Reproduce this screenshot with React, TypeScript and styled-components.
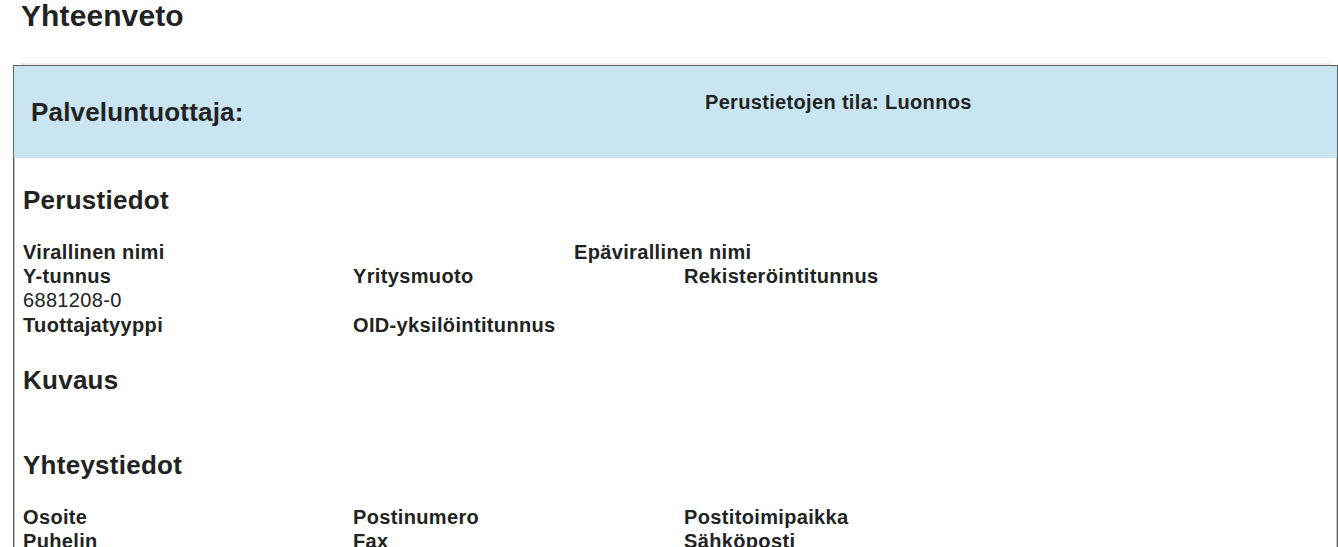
import styled, { createGlobalStyle } from "styled-components";

const GlobalStyle = createGlobalStyle`
  body {
    margin: 0;
    background: #fff;
    color: #222;
    font-family: "Liberation Sans", Arial, sans-serif;
  }
`;

type Field = { label: string; value?: string };
type FieldRow = { columns: string; fields: Field[] };

const THREE = "330px 331px 330px";

const basicRows: FieldRow[] = [
  { columns: "551px 551px", fields: [{ label: "Virallinen nimi" }, { label: "Epävirallinen nimi" }] },
  {
    columns: THREE,
    fields: [{ label: "Y-tunnus", value: "6881208-0" }, { label: "Yritysmuoto" }, { label: "Rekisteröintitunnus" }],
  },
  { columns: THREE, fields: [{ label: "Tuottajatyyppi" }, { label: "OID-yksilöintitunnus" }] },
];

const contactRows: FieldRow[] = [
  { columns: THREE, fields: [{ label: "Osoite" }, { label: "Postinumero" }, { label: "Postitoimipaikka" }] },
  { columns: THREE, fields: [{ label: "Puhelin" }, { label: "Fax" }, { label: "Sähköposti" }] },
];

const FieldRows = ({ rows }: { rows: FieldRow[] }) => (
  <div>
    {rows.map((row, i) => (
      <Row key={i} $columns={row.columns}>
        {row.fields.map((f) => (
          <FieldBox key={f.label}>
            <Label>{f.label}</Label>
            {f.value && <Value>{f.value}</Value>}
          </FieldBox>
        ))}
      </Row>
    ))}
  </div>
);

const App = () => {
  return (
    <Page>
      <GlobalStyle />
      <Title>Yhteenveto</Title>
      <Divider />
      <SummaryBox>
        <Header>
          <ProviderTitle>Palveluntuottaja:</ProviderTitle>
          <Status>Perustietojen tila: Luonnos</Status>
        </Header>
        <Body>
          <Section>
            <SectionTitle>Perustiedot</SectionTitle>
            <FieldRows rows={basicRows} />
          </Section>
          <Section>
            <SectionTitle>Kuvaus</SectionTitle>
            <Description />
          </Section>
          <Section>
            <SectionTitle>Yhteystiedot</SectionTitle>
            <FieldRows rows={contactRows} />
          </Section>
        </Body>
      </SummaryBox>
    </Page>
  );
};

const Page = styled.div`
  width: 1338px;
  padding-top: 1px;
`;

const Title = styled.h1`
  margin: 0 0 0 21px;
  font-size: 30px;
  line-height: 30px;
  font-weight: bold;
  letter-spacing: 0.1px;
  color: #222;
`;

const Divider = styled.div`
  margin: 32px 8px 0 21px;
  height: 2px;
  background: #ececec;
`;

const SummaryBox = styled.div`
  margin-left: 13px;
  border: 1px solid #606060;
  box-shadow: inset 1px 0 #c4c4c4, inset -1px 0 #c4c4c4;
  min-height: 600px;
`;

const Header = styled.div`
  display: grid;
  grid-template-columns: 691px 1fr;
  height: 92px;
  background: #c9e5f1;
`;

const ProviderTitle = styled.h2`
  margin: 31px 0 0 17px;
  font-size: 26px;
  line-height: 30px;
  font-weight: bold;
  letter-spacing: 0.18px;
`;

const Status = styled.div`
  margin-top: 24px;
  font-size: 20px;
  line-height: 24px;
  font-weight: bold;
  letter-spacing: 0.33px;
`;

const Body = styled.div`
  display: flex;
  flex-direction: column;
  gap: 28px;
  padding: 27px 9px 0;
`;

const Section = styled.section`
  display: flex;
  flex-direction: column;
`;

const SectionTitle = styled.h3`
  margin: 0 0 25px;
  font-size: 26px;
  line-height: 30px;
  font-weight: bold;
  letter-spacing: 0.26px;
`;

const Description = styled.div`
  min-height: 2px;
`;

const Row = styled.div<{ $columns: string }>`
  display: grid;
  grid-template-columns: ${(p) => p.$columns};
`;

const FieldBox = styled.div`
  display: flex;
  flex-direction: column;
`;

const Label = styled.div`
  font-size: 20px;
  line-height: 24px;
  font-weight: bold;
  letter-spacing: 0.35px;
`;

const Value = styled.div`
  font-size: 20px;
  line-height: 24px;
  letter-spacing: 0.33px;
  margin-bottom: 1px;
`;

export default App;
